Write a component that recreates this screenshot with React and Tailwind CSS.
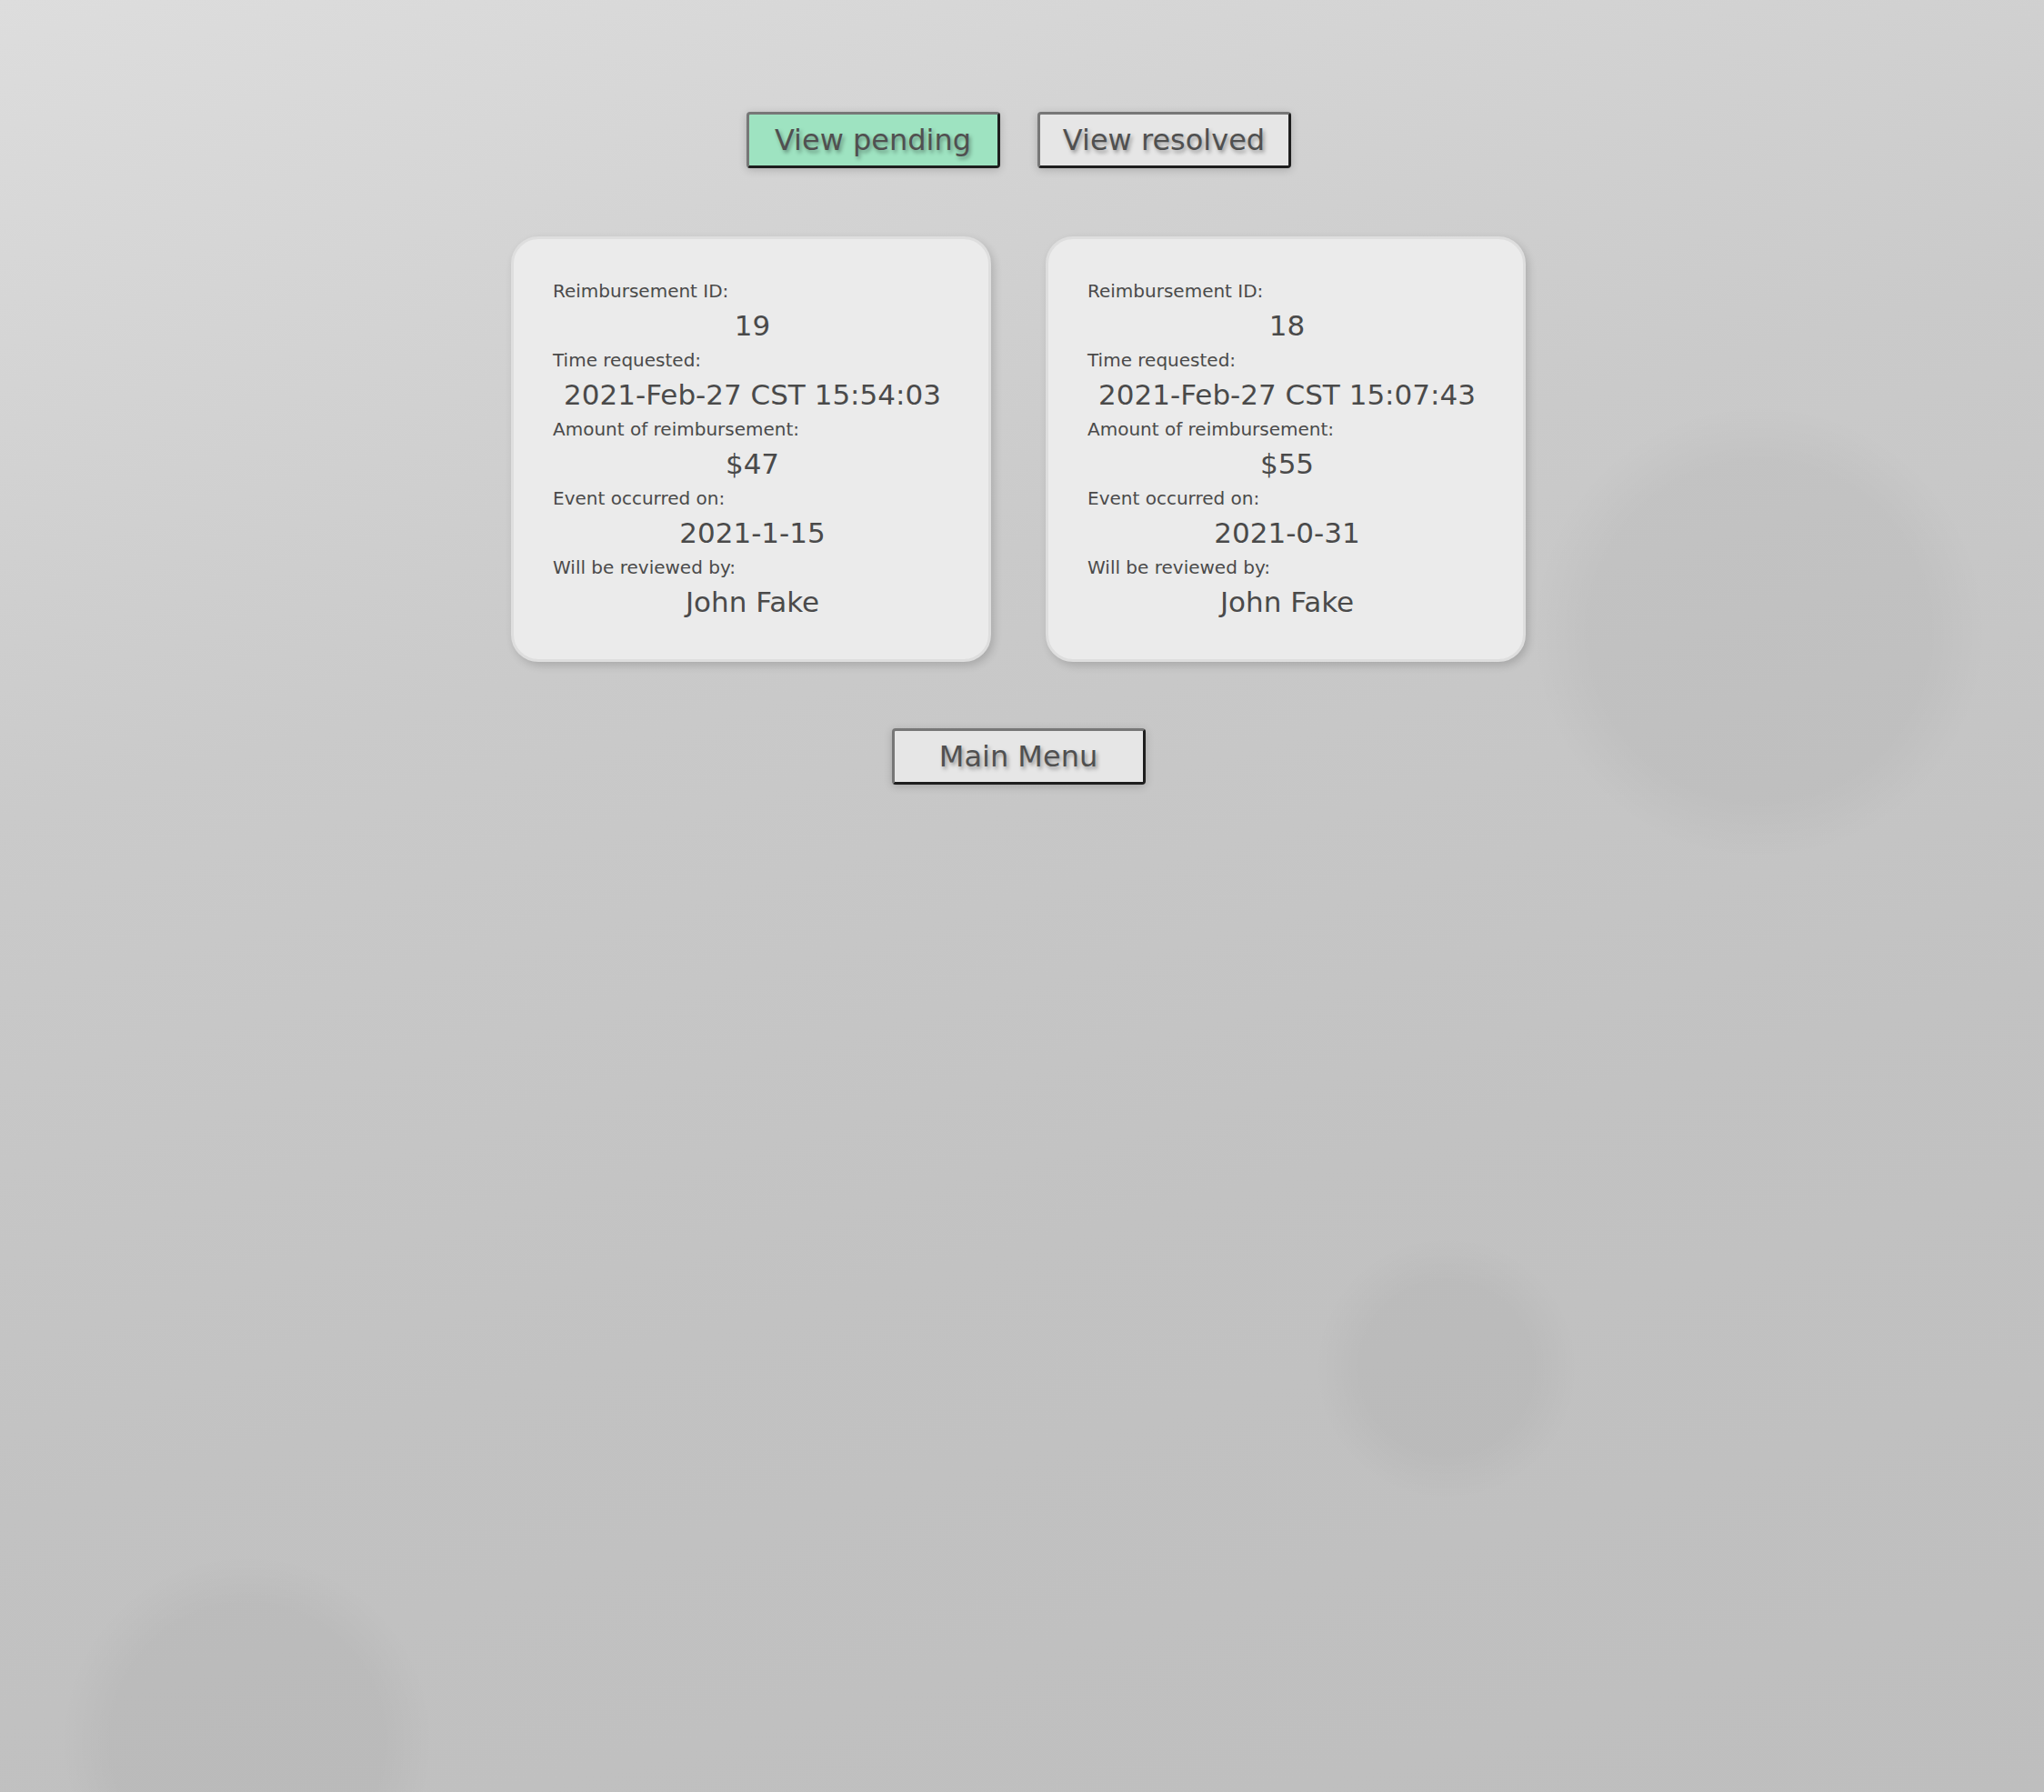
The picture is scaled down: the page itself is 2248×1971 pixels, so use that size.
import React from 'react';

const requests = [
  { id: 19, time: '2021-Feb-27 CST 15:54:03', amount: '$47', date: '2021-1-15', reviewer: 'John Fake' },
  { id: 18, time: '2021-Feb-27 CST 15:07:43', amount: '$55', date: '2021-0-31', reviewer: 'John Fake' },
];

function NavButton({ label, active }) {
  return (
    <button
      className={`flex h-[62px] w-[279px] items-center justify-center rounded-[4px] border-[3px] border-t-[#777777] border-l-[#777777] border-r-[#1e1e1e] border-b-[#1e1e1e] text-[32px] text-[#505050] shadow-[0_2px_10px_rgba(0,0,0,0.18)] [text-shadow:2px_3px_4px_rgba(0,0,0,0.35)] ${active ? 'bg-[#9ee3c1]' : 'bg-[#e6e6e6]'}`}
    >
      {label}
    </button>
  );
}

function Field({ label, value }) {
  return (
    <div>
      <div className="text-[20px] leading-[30px]">{label}</div>
      <div className="text-center text-[31px] leading-[46px]">{value}</div>
    </div>
  );
}

function RequestCard({ item }) {
  return (
    <div className="w-[528px] rounded-[30px] border-[3px] border-[#dedede] bg-[#ebebeb] pl-[43px] pr-[40px] pt-[42px] pb-[40px] shadow-[3px_4px_10px_rgba(0,0,0,0.16)]">
      <Field label="Reimbursement ID:" value={item.id} />
      <Field label="Time requested:" value={item.time} />
      <Field label="Amount of reimbursement:" value={item.amount} />
      <Field label="Event occurred on:" value={item.date} />
      <Field label="Will be reviewed by:" value={item.reviewer} />
    </div>
  );
}

export default function App() {
  return (
    <div className="min-h-[1971px] w-full bg-[radial-gradient(circle_at_1935px_695px,rgba(0,0,0,0.03)_0px,rgba(0,0,0,0.03)_185px,transparent_250px),radial-gradient(circle_at_1591px_1505px,rgba(0,0,0,0.03)_0px,rgba(0,0,0,0.03)_95px,transparent_145px),radial-gradient(circle_at_272px_1915px,rgba(0,0,0,0.03)_0px,rgba(0,0,0,0.03)_150px,transparent_205px),linear-gradient(165deg,#dddddd_0%,#cacaca_35%,#c2c2c2_65%,#bebebe_100%)] pr-[8px] font-['DejaVu_Sans','Verdana',sans-serif] text-[#4a4a4a]">
      <div className="flex justify-center gap-[41px] pt-[123px]">
        <NavButton label="View pending" active />
        <NavButton label="View resolved" />
      </div>

      <div className="mt-[75px] flex justify-center gap-[60px]">
        {requests.map(r => (
          <RequestCard key={r.id} item={r} />
        ))}
      </div>

      <div className="mt-[73px] flex justify-center">
        <NavButton label="Main Menu" />
      </div>
    </div>
  );
}
